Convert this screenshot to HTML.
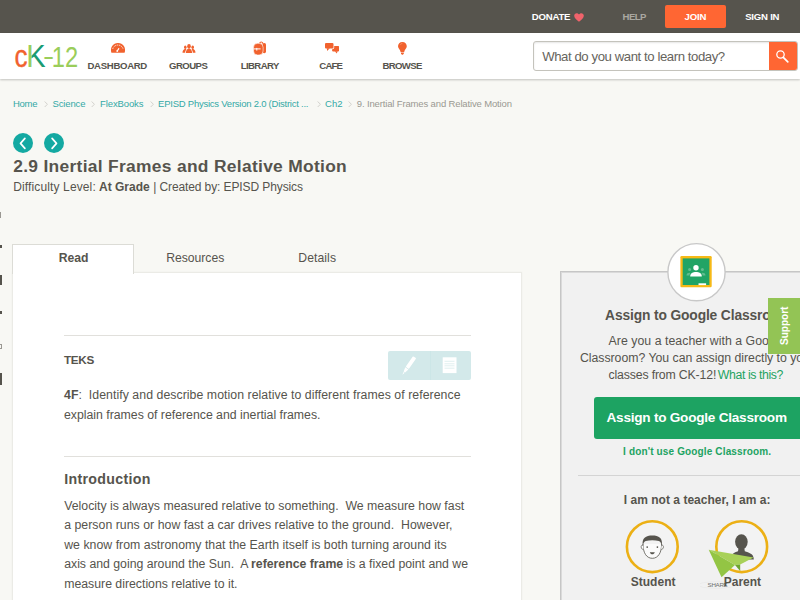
<!DOCTYPE html>
<html lang="en">
<head>
<meta charset="utf-8">
<title>2.9 Inertial Frames and Relative Motion</title>
<style>
*{box-sizing:border-box;margin:0;padding:0}
html,body{width:800px;height:600px;overflow:hidden}
body{background:#f8f8f4;font-family:"Liberation Sans",sans-serif;color:#56544d;position:relative}
.abs{position:absolute}
span.x{position:absolute;white-space:nowrap}
#topbar{position:absolute;left:0;top:0;width:800px;height:33px;background:#56544d}
#join{position:absolute;left:665px;top:5px;width:61px;height:23px;background:#ff6633;border-radius:2px;z-index:4}
#nav{position:absolute;left:0;top:33px;width:800px;height:46px;background:#fff;box-shadow:0 1px 2px rgba(0,0,0,0.22)}
#search{position:absolute;left:533px;top:41px;width:265px;height:30px;border:1px solid #c4c3bc;border-radius:3px;background:#fff;overflow:hidden;box-shadow:inset 0 1px 2px rgba(0,0,0,0.10);z-index:4}
#search .btn{position:absolute;left:235px;top:-1px;width:29px;height:30px;background:#ff6633}
.sep{position:absolute;top:101.200px;width:4px;height:6.500px;z-index:4}
.circ{position:absolute;top:133.300px;width:20px;height:20px;border-radius:50%;background:#14a9a2}
#tabRead{position:absolute;left:12px;top:244px;width:122px;height:30px;background:#fff;border:1px solid #dcdcd6;border-bottom:none;z-index:3}
#content{position:absolute;left:12px;top:272px;width:510px;height:340px;background:#fff;border:1px solid #ebebe6;box-shadow:0 0 2px rgba(0,0,0,0.04);z-index:2}
.hr{position:absolute;left:64px;width:407px;height:1px;background:#e1e0dc;z-index:4}
#tools{position:absolute;left:387.500px;top:350.700px;width:83px;height:29px;background:#d3e9ea;border-radius:2px;z-index:4}
#side{position:absolute;left:560px;top:271px;width:260px;height:340px;background:#f1f1f1;border:1px solid #c6c6c6;box-shadow:inset 0 0 0 1px rgba(198,198,198,0.55)}
#gbtn{position:absolute;left:594px;top:397px;width:210px;height:42px;background:#1da362;border-radius:3px;z-index:4}
#support{position:absolute;left:768px;top:298px;width:32px;height:55.500px;background:#93c455;z-index:8}
.ycirc{position:absolute;top:521px;width:53px;height:53px;border-radius:50%;border:3px solid #f0b10a;background:#f4f4f4;z-index:3}
</style>
</head>
<body>
<div id="topbar">
  <svg class="abs" style="left:574.200px;top:13px" width="10" height="9" viewBox="0 0 11 10" preserveAspectRatio="none"><path d="M5.500 9.700 C2.500 7.200 0.200 5.300 0.200 3 C0.200 1.300 1.500 0.200 3 0.200 C4 0.200 5 0.800 5.500 1.800 C6 0.800 7 0.200 8 0.200 C9.500 0.200 10.800 1.300 10.800 3 C10.800 5.300 8.500 7.200 5.500 9.700Z" fill="#f0636b"/></svg>
  <div id="join"></div>
</div>
<div id="nav"></div>
<!-- logo: real text, styled -->
<svg class="abs" style="left:10px;top:40px;z-index:4" width="72" height="32" viewBox="0 0 72 32" font-family="Liberation Sans, sans-serif">
  <defs>
    <clipPath id="kstem"><rect x="0" y="0" width="21.800" height="32"/></clipPath>
    <clipPath id="karms"><rect x="21.800" y="0" width="20" height="32"/></clipPath>
  </defs>
  <text transform="translate(4.600,26.600) scale(0.840,1)" font-size="31" fill="#f1622e" stroke="#f1622e" stroke-width="0.350">c</text>
  <g clip-path="url(#kstem)"><text transform="translate(16.200,26.500) scale(0.950,1)" font-size="30.600" fill="#9acd5a">K</text></g>
  <g clip-path="url(#karms)"><text transform="translate(16.200,26.500) scale(0.950,1)" font-size="30.600" fill="#1a9c73">K</text></g>
  <text transform="translate(33,23.600) scale(1.400,1)" font-size="24" fill="#9acd5a">-</text>
  <text transform="translate(41.800,26.500) scale(0.800,1)" font-size="29.600" fill="#9acd5a">12</text>
</svg>
<!-- nav icons -->
<svg class="abs" style="left:110.750px;top:43.100px;z-index:4" width="14" height="9.800" viewBox="0 0 14 9.800"><path d="M0.470 9.700 A7.050 7.050 0 1 1 13.530 9.700 Z" fill="#f1622e"/><path d="M1.700 6 A5.400 5.400 0 0 1 12.100 6" stroke="#fff" stroke-width="0.900" stroke-dasharray="1.300 0.700" fill="none" opacity="0.900"/><path d="M6.200 8 L7.800 5.700" stroke="#fff" stroke-width="1.200" stroke-linecap="round"/><circle cx="6.300" cy="7.900" r="0.900" fill="#fff"/></svg>
<svg class="abs" style="left:181.900px;top:43.600px;z-index:4" width="14" height="9.200" viewBox="0 0 14 9.200" fill="#f1622e"><ellipse cx="7" cy="2.300" rx="1.800" ry="2.200"/><path d="M3.900 9.100 C3.900 6.400 5 5.600 6.200 4.600 H7.800 C9 5.600 10.100 6.400 10.100 9.100Z"/><ellipse cx="3.300" cy="3.300" rx="1.300" ry="1.700"/><ellipse cx="10.700" cy="3.300" rx="1.300" ry="1.700"/><path d="M0.500 8.700 C0.500 6.600 1.600 5.800 2.700 5 H3.900 L4.400 5.500 C3.500 6.400 3.200 7.500 3.200 8.700Z"/><path d="M13.500 8.700 C13.500 6.600 12.400 5.800 11.300 5 H10.100 L9.600 5.500 C10.500 6.400 10.800 7.500 10.800 8.700Z"/></svg>
<svg class="abs" style="left:253px;top:41px;z-index:4" width="14" height="14" viewBox="0 0 14 14"><path d="M6.700 3 C6.700 0.300 10 0.300 10 3" stroke="#f1622e" stroke-width="1.100" fill="none"/><rect x="9.600" y="2" width="3.400" height="10.200" rx="1.600" fill="#f1622e"/><rect x="0.500" y="2.300" width="9.600" height="11.700" rx="4" fill="#f1622e" stroke="#fff" stroke-width="0.600"/><path d="M1 7.900 L7.600 7.900 M3.800 6.900 L3.800 9.600" stroke="#fff" stroke-width="1"/></svg>
<svg class="abs" style="left:324.500px;top:43.250px;z-index:4" width="14.400" height="10.500" viewBox="0 0 14.400 10.500" fill="#f1622e"><rect x="7.100" y="2.900" width="7.100" height="5.600" rx="1.100"/><path d="M9.700 8.300 H12.500 L11.900 10.400Z"/><rect x="-0.700" y="-0.700" width="9.900" height="6.900" rx="1.600" fill="#fff"/><path d="M1.200 5.200 L1.600 8.700 L5.600 5.200Z" fill="#fff"/><rect x="0" y="0" width="8.500" height="5.500" rx="1.100"/><path d="M1.800 5.200 L2.100 7.900 L4.800 5.200Z"/></svg>
<svg class="abs" style="left:397.900px;top:41.500px;z-index:4" width="8.800" height="13.500" viewBox="0 0 8.800 13.500" fill="#f1622e"><path d="M4.400 0 C1.700 0 0 2 0 4.300 C0 6.600 2.300 7.600 2.700 10.300 H6.100 C6.500 7.600 8.800 6.600 8.800 4.300 C8.800 2 7.100 0 4.400 0Z"/><rect x="3" y="10.700" width="2.800" height="1.300"/><path d="M3.300 12.300 H5.500 L4.400 13.500Z"/><path d="M2.300 2.600 C2.900 1.800 3.600 1.500 4.300 1.500" stroke="#f9a580" stroke-width="0.700" fill="none"/></svg>
<div id="search"><div class="btn"><svg style="position:absolute;left:6px;top:8px" width="16" height="16" viewBox="0 0 16 16"><circle cx="5.500" cy="5.500" r="3.700" stroke="#fff" stroke-width="1.300" fill="none"/><path d="M8.300 8.300 L12.800 12.800" stroke="#fff" stroke-width="1.700" stroke-linecap="round"/></svg></div></div>

<!-- breadcrumb separators -->
<svg class="sep" style="left:43.6px" viewBox="0 0 4 6.500"><path d="M0.700 0.500 L3.400 3.250 L0.700 6" stroke="#d2d1cc" stroke-width="1" fill="none"/></svg>
<svg class="sep" style="left:91.4px" viewBox="0 0 4 6.500"><path d="M0.700 0.500 L3.400 3.250 L0.700 6" stroke="#d2d1cc" stroke-width="1" fill="none"/></svg>
<svg class="sep" style="left:149.6px" viewBox="0 0 4 6.500"><path d="M0.700 0.500 L3.400 3.250 L0.700 6" stroke="#d2d1cc" stroke-width="1" fill="none"/></svg>
<svg class="sep" style="left:317.0px" viewBox="0 0 4 6.500"><path d="M0.700 0.500 L3.400 3.250 L0.700 6" stroke="#d2d1cc" stroke-width="1" fill="none"/></svg>
<svg class="sep" style="left:348.0px" viewBox="0 0 4 6.500"><path d="M0.700 0.500 L3.400 3.250 L0.700 6" stroke="#d2d1cc" stroke-width="1" fill="none"/></svg>

<div class="circ" style="left:13px"><svg width="20" height="20" viewBox="0 0 20 20"><path d="M11.900 5.400 L7.500 10.400 L11.900 15.400" stroke="#fff" stroke-width="1.700" fill="none" stroke-linecap="round" stroke-linejoin="round"/></svg></div>
<div class="circ" style="left:43.500px"><svg width="20" height="20" viewBox="0 0 20 20"><path d="M8.100 5.400 L12.500 10.400 L8.100 15.400" stroke="#fff" stroke-width="1.700" fill="none" stroke-linecap="round" stroke-linejoin="round"/></svg></div>

<!-- left edge marks -->
<div class="abs" style="left:0;top:212px;width:1px;height:6px;background:#9a9892"></div>
<div class="abs" style="left:0;top:245px;width:2px;height:3px;background:#56544d"></div>
<div class="abs" style="left:0;top:275px;width:2px;height:10px;background:#56544d"></div>
<div class="abs" style="left:0;top:311px;width:2px;height:3px;background:#56544d"></div>
<div class="abs" style="left:0;top:344px;width:2px;height:5px;border:1px solid #9a9892;border-left:none"></div>
<div class="abs" style="left:0;top:373px;width:2px;height:12px;background:#56544d"></div>

<div id="tabRead"></div>
<div id="content"></div>
<div class="hr" style="top:335px"></div>
<div id="tools">
  <svg style="position:absolute;left:0;top:0" width="83" height="29" viewBox="0 0 83 29">
    <rect x="42" y="0" width="0.800" height="29" fill="#cbe5e7"/>
    <g transform="translate(26.700,6.200) rotate(35)" fill="#fff"><rect x="-1.900" y="0" width="3.800" height="13" rx="0.900"/><path d="M-1.900 13.700 H1.900 L0.900 18 H-0.900Z"/><path d="M-0.700 18.500 H0.700 L0 21.500Z"/></g>
    <rect x="54.700" y="6.300" width="13.800" height="15.800" fill="#fff"/>
    <path d="M56.500 10.300 H66.500 M56.500 12.800 H66.500 M56.500 14.800 H66.500 M56.500 17.200 H66.500" stroke="#d3e9ea" stroke-width="0.700"/>
  </svg>
</div>
<div class="hr" style="top:455.500px"></div>

<!-- sidebar -->
<div id="side"></div>
<svg class="abs" style="left:660px;top:238px;z-index:3" width="75" height="70" viewBox="660 238 75 70">
<circle cx="696.500" cy="272.200" r="28.600" fill="#fff" stroke="#c8c8c8" stroke-width="1.400"/>
<rect x="680.400" y="256.100" width="31.300" height="31.200" rx="1.200" fill="#f7b916"/>
<rect x="682.700" y="258.400" width="26.700" height="26.600" fill="#21a465"/>
<circle cx="696" cy="267.700" r="2.700" fill="#fff"/>
<path d="M690.200 276.500 C690.200 273 693 272 696 272 C699 272 701.800 273 701.800 276.500Z" fill="#fff"/>
<circle cx="689.600" cy="269.600" r="1.500" fill="#62bd90"/><circle cx="702.400" cy="269.600" r="1.500" fill="#62bd90"/>
<path d="M686.500 275.500 C686.500 273.500 688 272.800 689.600 272.800 L690.500 273.100 C689.700 274 689.500 274.600 689.500 275.500Z" fill="#62bd90"/>
<path d="M705.500 275.500 C705.500 273.500 704 272.800 702.400 272.800 L701.500 273.100 C702.300 274 702.500 274.600 702.500 275.500Z" fill="#62bd90"/>
<rect x="698.500" y="283.300" width="7.600" height="1.800" fill="#fff"/>
</svg>
<div id="gbtn"></div>
<div class="abs" style="left:578px;top:475px;width:222px;height:1px;background:#d4d4d4;z-index:3"></div>
<svg class="abs" style="left:620px;top:515px;z-index:3" width="160" height="65" viewBox="620 515 160 65">
<circle cx="652.300" cy="546.700" r="25.400" fill="#f3f3f3" stroke="#ecb015" stroke-width="2.600"/>
<circle cx="741.700" cy="546.700" r="25.400" fill="#f3f3f3" stroke="#ecb015" stroke-width="2.600"/>
<g>
<path d="M643 544 C643 552.500 646.300 558.300 652.300 558.300 C658.300 558.300 661.600 552.500 661.600 544" fill="#fbfbfb" stroke="#56544d" stroke-width="0.800"/>
<path d="M643 545.200 C640.300 544.600 640.600 549.600 643.500 549.400 M661.600 545.200 C664.300 544.600 664 549.600 661.100 549.400" fill="#fbfbfb" stroke="#56544d" stroke-width="0.700"/>
<path d="M642.900 545.800 C641.400 538 646 535.500 652.300 535.500 C658.600 535.500 663.200 538 661.700 545.800 C661.300 542.800 660.300 541.300 658.800 540.900 C655 540 649.600 540 645.800 540.900 C644.300 541.300 643.300 542.800 642.900 545.800Z" fill="#56544d"/>
<circle cx="647.200" cy="547.100" r="0.850" fill="#56544d"/><circle cx="657.400" cy="547.100" r="0.850" fill="#56544d"/>
<path d="M649.800 552.300 C650.800 555 653.800 555 654.800 552.300Z" fill="#56544d"/>
</g>
<g>
<ellipse cx="741.400" cy="541.800" rx="6.300" ry="7.600" fill="#56544d"/><path d="M731 559.500 C731 553.500 734 552.800 738 551.300 L738.500 548 H744.300 L744.800 551.300 C748.800 552.800 753.800 553.500 753.800 559.500Z" fill="#56544d"/>
</g>
</svg>
<!-- paper plane share -->
<svg class="abs" style="left:700px;top:545px;z-index:7" width="60" height="50" viewBox="0 0 60 50"><ellipse cx="17" cy="40" rx="19" ry="3.300" fill="none" stroke="#e4e4e4" stroke-width="0.500"/><path d="M8.700 4.800 L53.600 12.400 L40.200 19.400 L35 20Z" fill="#a8d158"/><path d="M8.700 4.800 L35 20 L21.500 32.300Z" fill="#93c544"/><path d="M35 20 L40.200 19.400 L40.200 25.900Z" fill="#6ea52f"/><text x="7.600" y="41.600" font-family="Liberation Sans, sans-serif" font-size="6.200" fill="#6e6e6e" letter-spacing="-0.300">SHARE</text></svg>
<div id="support"><span style="position:absolute;left:10px;top:46.500px;transform:rotate(-90deg);transform-origin:0 0;color:#fff;font-size:10.200px;font-weight:bold;line-height:13px;white-space:nowrap;letter-spacing:-0.100px">Support</span></div>
<span class="x" id="donate" style="left:531.80px;top:10.67px;font-size:9.6px;line-height:12px;color:#fff;z-index:4;font-weight:bold;letter-spacing:-0.219px;">DONATE</span>
<span class="x" id="help" style="left:622.50px;top:10.67px;font-size:9.6px;line-height:12px;color:#aaa8a1;z-index:4;font-weight:bold;letter-spacing:-0.531px;">HELP</span>
<span class="x" id="tjoin" style="left:684.50px;top:10.67px;font-size:9.6px;line-height:12px;color:#fff;z-index:5;font-weight:bold;letter-spacing:-0.135px;">JOIN</span>
<span class="x" id="signin" style="left:745.20px;top:10.67px;font-size:9.6px;line-height:12px;color:#fff;z-index:4;font-weight:bold;letter-spacing:-0.236px;">SIGN IN</span>
<span class="x" id="n1" style="left:87.50px;top:59.67px;font-size:9.6px;line-height:12px;color:#56544d;z-index:4;font-weight:bold;letter-spacing:-0.320px;">DASHBOARD</span>
<span class="x" id="n2" style="left:169.00px;top:59.67px;font-size:9.6px;line-height:12px;color:#56544d;z-index:4;font-weight:bold;letter-spacing:-0.559px;">GROUPS</span>
<span class="x" id="n3" style="left:240.80px;top:59.67px;font-size:9.6px;line-height:12px;color:#56544d;z-index:4;font-weight:bold;letter-spacing:-0.633px;">LIBRARY</span>
<span class="x" id="n4" style="left:319.25px;top:59.67px;font-size:9.6px;line-height:12px;color:#56544d;z-index:4;font-weight:bold;letter-spacing:-0.792px;">CAFE</span>
<span class="x" id="n5" style="left:382.60px;top:59.67px;font-size:9.6px;line-height:12px;color:#56544d;z-index:4;font-weight:bold;letter-spacing:-0.694px;">BROWSE</span>
<span class="x" id="tsearch" style="left:542.20px;top:47.93px;font-size:13.2px;line-height:17px;color:#66645d;z-index:5;letter-spacing:-0.434px;">What do you want to learn today?</span>
<span class="x" id="b1" style="left:13.00px;top:98.21px;font-size:9.5px;line-height:12px;color:#33a9a6;z-index:4;letter-spacing:-0.281px;">Home</span>
<span class="x" id="b2" style="left:52.50px;top:98.21px;font-size:9.5px;line-height:12px;color:#33a9a6;z-index:4;letter-spacing:-0.135px;">Science</span>
<span class="x" id="b3" style="left:100.10px;top:98.21px;font-size:9.5px;line-height:12px;color:#33a9a6;z-index:4;letter-spacing:-0.120px;">FlexBooks</span>
<span class="x" id="b4" style="left:158.10px;top:98.21px;font-size:9.5px;line-height:12px;color:#33a9a6;z-index:4;letter-spacing:-0.238px;">EPISD Physics Version 2.0 (District ...</span>
<span class="x" id="b5" style="left:325.10px;top:98.21px;font-size:9.5px;line-height:12px;color:#33a9a6;z-index:4;letter-spacing:-0.019px;">Ch2</span>
<span class="x" id="b6" style="left:356.80px;top:98.21px;font-size:9.5px;line-height:12px;color:#9a9892;z-index:4;letter-spacing:-0.144px;">9. Inertial Frames and Relative Motion</span>
<span class="x" id="title" style="left:13.25px;top:155.07px;font-size:17.4px;line-height:23px;color:#56544d;z-index:4;font-weight:bold;letter-spacing:0.307px;">2.9 Inertial Frames and Relative Motion</span>
<span class="x" id="meta1" style="left:13.25px;top:179.44px;font-size:12px;line-height:16px;color:#56544d;z-index:4;letter-spacing:0.126px;">Difficulty Level:</span>
<span class="x" id="meta2" style="left:99.00px;top:179.44px;font-size:12px;line-height:16px;color:#56544d;z-index:4;font-weight:bold;letter-spacing:0.009px;">At Grade</span>
<span class="x" id="meta3" style="left:153.20px;top:179.44px;font-size:12px;line-height:16px;color:#56544d;z-index:4;letter-spacing:-0.104px;">| Created by: EPISD Physics</span>
<span class="x" id="tab1" style="left:58.75px;top:250.07px;font-size:12.2px;line-height:16px;color:#56544d;z-index:6;font-weight:bold;letter-spacing:-0.021px;">Read</span>
<span class="x" id="tab2" style="left:166.25px;top:249.57px;font-size:12.2px;line-height:16px;color:#56544d;z-index:4;letter-spacing:-0.033px;">Resources</span>
<span class="x" id="tab3" style="left:298.25px;top:249.57px;font-size:12.2px;line-height:16px;color:#56544d;z-index:4;letter-spacing:0.081px;">Details</span>
<span class="x" id="teks" style="left:64.00px;top:352.45px;font-size:11.7px;line-height:15px;color:#56544d;z-index:4;font-weight:bold;letter-spacing:-0.307px;">TEKS</span>
<span class="x" id="l1" style="left:64.00px;top:387.04px;font-size:12.3px;line-height:16px;color:#56544d;z-index:4;letter-spacing:0.050px;"><b>4F</b>:&nbsp; Identify and describe motion relative to different frames of reference</span>
<span class="x" id="l2" style="left:64.00px;top:406.54px;font-size:12.3px;line-height:16px;color:#56544d;z-index:4;letter-spacing:-0.011px;">explain frames of reference and inertial frames.</span>
<span class="x" id="intro" style="left:64.20px;top:470.48px;font-size:14.2px;line-height:18px;color:#56544d;z-index:4;font-weight:bold;letter-spacing:0.323px;">Introduction</span>
<span class="x" id="p1" style="left:64.20px;top:497.74px;font-size:12.3px;line-height:16px;color:#56544d;z-index:4;letter-spacing:0.006px;">Velocity is always measured relative to something.&nbsp; We measure how fast</span>
<span class="x" id="p2" style="left:64.20px;top:517.14px;font-size:12.3px;line-height:16px;color:#56544d;z-index:4;letter-spacing:0.030px;">a person runs or how fast a car drives relative to the ground.&nbsp; However,</span>
<span class="x" id="p3" style="left:64.20px;top:536.64px;font-size:12.3px;line-height:16px;color:#56544d;z-index:4;letter-spacing:0.026px;">we know from astronomy that the Earth itself is both turning around its</span>
<span class="x" id="p4" style="left:64.20px;top:556.14px;font-size:12.3px;line-height:16px;color:#56544d;z-index:4;letter-spacing:-0.013px;">axis and going around the Sun.&nbsp; A <b>reference frame</b> is a fixed point and we</span>
<span class="x" id="p5" style="left:64.20px;top:575.74px;font-size:12.3px;line-height:16px;color:#56544d;z-index:4;letter-spacing:-0.009px;">measure directions relative to it.</span>
<span class="x" id="st" style="left:605.10px;top:306.62px;font-size:13.8px;line-height:18px;color:#56544d;z-index:4;font-weight:bold;letter-spacing:-0.134px;">Assign to Google Classroom</span>
<span class="x" id="s1" style="left:608.50px;top:332.84px;font-size:12.3px;line-height:16px;color:#56544d;z-index:4;letter-spacing:0.044px;">Are you a teacher with a Google</span>
<span class="x" id="s2" style="left:579.90px;top:349.94px;font-size:12.3px;line-height:16px;color:#56544d;z-index:4;letter-spacing:-0.023px;">Classroom? You can assign directly to your</span>
<span class="x" id="s3" style="left:608.50px;top:366.64px;font-size:12.3px;line-height:16px;color:#56544d;z-index:4;letter-spacing:-0.161px;">classes from CK-12!</span>
<span class="x" id="s3b" style="left:717.80px;top:366.64px;font-size:12.3px;line-height:16px;color:#1da362;z-index:4;letter-spacing:-0.399px;">What is this?</span>
<span class="x" id="btn" style="left:606.50px;top:409.09px;font-size:13.6px;line-height:18px;color:#fff;z-index:5;font-weight:bold;letter-spacing:-0.242px;">Assign to Google Classroom</span>
<span class="x" id="nouse" style="left:623.10px;top:445.34px;font-size:10px;line-height:13px;color:#1da362;z-index:4;font-weight:bold;letter-spacing:0.141px;">I don't use Google Classroom.</span>
<span class="x" id="iam" style="left:623.75px;top:492.34px;font-size:12px;line-height:16px;color:#56544d;z-index:4;font-weight:bold;letter-spacing:0.026px;">I am not a teacher, I am a:</span>
<span class="x" id="stu" style="left:630.75px;top:573.94px;font-size:12px;line-height:16px;color:#56544d;z-index:4;font-weight:bold;letter-spacing:0.013px;">Student</span>
<span class="x" id="par" style="left:723.75px;top:573.94px;font-size:12px;line-height:16px;color:#56544d;z-index:9;font-weight:bold;letter-spacing:-0.022px;">Parent</span>
</body>
</html>
